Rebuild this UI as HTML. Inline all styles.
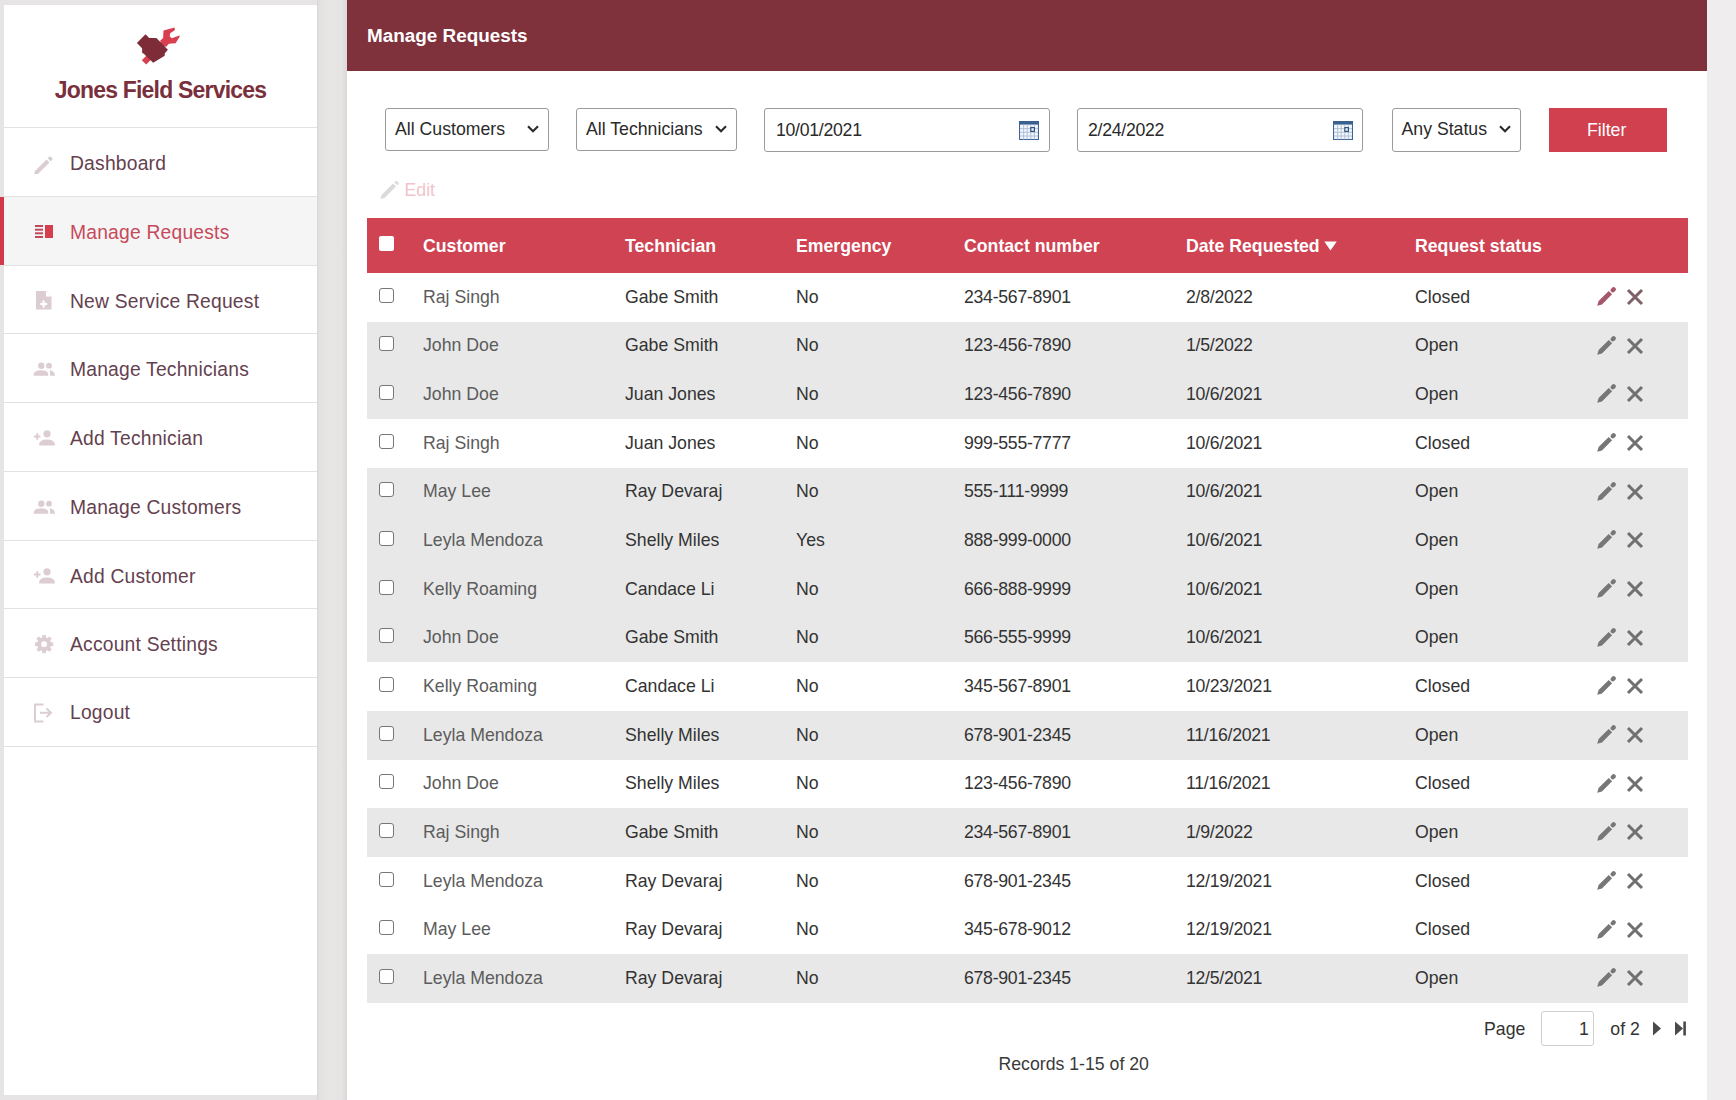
<!DOCTYPE html>
<html><head><meta charset="utf-8">
<style>
*{box-sizing:border-box;margin:0;padding:0}
html,body{width:1736px;height:1100px;overflow:hidden}
body{background:#e6e4e4;font-family:"Liberation Sans",sans-serif;position:relative}
.a{position:absolute;white-space:nowrap;line-height:1}
#right{position:absolute;left:1707px;top:0;width:29px;height:1100px;background:#efeded}
#side{position:absolute;left:4px;top:5px;width:313px;height:1090px;background:#fff}
#brand{left:4px;width:313px;top:78.8px;text-align:center;font-weight:bold;font-size:23px;letter-spacing:-0.8px;color:#7a2f3c}
.sep{position:absolute;left:4px;width:313px;height:1px;background:#e2e2e2}
.navt{font-size:19.3px;letter-spacing:0.2px;color:#65414f;left:70px}
.navi{position:absolute;left:30px;width:28px;height:24px}
#actbg{position:absolute;left:4px;top:197px;width:313px;height:68px;background:#f6f5f5}
#actbar{position:absolute;left:0;top:197px;width:4px;height:68px;background:#d3394d}
#gap{position:absolute;left:317px;top:0;width:30px;height:1100px;background:linear-gradient(to right,#d8d6d6 0,#e2e0e0 2px,#e8e5e5 40%,#e7e4e4 80%,#dad8d8 100%)}
#main{position:absolute;left:347px;top:0;width:1360px;height:1100px;background:#fff}
#hdr{position:absolute;left:347px;top:0;width:1360px;height:71px;background:#7f313c}
#htitle{left:367px;top:26.5px;font-size:18.9px;font-weight:bold;color:#fff}
.box{position:absolute;top:108px;height:43px;border:1px solid #9b9b9b;border-radius:3px;background:#fff}
.ftxt{font-size:17.7px;color:#2a2a2a;top:121px}
.chev{position:absolute;top:125px}
#filter{position:absolute;left:1549px;top:108px;width:118px;height:44px;background:#d1404f}
#filtert{left:1549px;width:118px;text-align:center;top:121px;font-size:17.7px;color:#fff}
#editt{left:404.5px;top:182px;font-size:17.7px;color:#f2c3cb}
#th{position:absolute;left:367px;top:218px;width:1321px;height:55px;background:#cf4353}
.tht{font-size:17.7px;font-weight:bold;color:#fff;top:238px}
#rows{position:absolute;left:367px;top:218px;width:1321px}
.row{position:absolute;left:0;width:1321px;height:48.67px;font-size:17.7px;color:#333}
.row.g{background:#e8e8e8}
.row span{position:absolute;top:15.5px;white-space:nowrap;line-height:1}
.row .c1{color:#5c5c5c}
.row .c4,.row .c5{letter-spacing:-0.28px}
.num{letter-spacing:-0.28px}
.cb{position:absolute;left:12px;top:14.6px;width:15px;height:15px;border:1.2px solid #767676;border-radius:3px;background:#fff}
.row .ed{position:absolute;left:1229px;top:14px}
.row .x{position:absolute;left:1259px;top:15px}
.pgt{font-size:17.7px;color:#333}
</style></head><body>

<div id="right"></div>
<div id="gap"></div>
<div id="side"></div>
<div id="actbg"></div>
<div id="actbar"></div>
<svg class="logo" style="position:absolute;left:130px;top:22px" width="55" height="46" viewBox="130 22 55 46">
  <path d="M144 62.4 L165 41.5" stroke="#d83f50" stroke-width="6.2"/>
  <path d="M160.1 40.8 L163.1 37.9 L163.5 30.4 L174.4 27.4 L175 30 L170.2 33.3 L169.7 36.2 L171.8 38.3 L179.4 35.4 L179.8 36.4 L175.6 43.3 L168.9 43.8 L166 47.1 Z" fill="#d83f50"/>
  <path d="M136.9 43.1 L145.5 34.3 L149.2 38.1 L156.4 38.1 L167.9 49.8 L164.7 53.6 L164.7 55.7 L153.2 62.8 L143.8 53.8 L142.1 52.8 L142.1 48.2 Z" fill="#7e2c38"/>
</svg>
<div id="brand" class="a">Jones Field Services</div>
<div class="sep" style="top:127px"></div>
<div class="sep" style="top:196px"></div>
<div class="sep" style="top:265px"></div>
<div class="sep" style="top:333px"></div>
<div class="sep" style="top:402px"></div>
<div class="sep" style="top:471px"></div>
<div class="sep" style="top:540px"></div>
<div class="sep" style="top:608px"></div>
<div class="sep" style="top:677px"></div>
<div class="sep" style="top:746px"></div>
<svg class="navi" style="top:150.3px" viewBox="0 0 28 24"><path d="M5 21 L16.5 9.5 L19.5 12.5 L8 24 L4.5 24.5 Z" fill="#dccdd2"/><path d="M5 21 L8 24 L4.5 24.5 Z" fill="#d0d0d0"/><path d="M17.7 8.3 L19.3 6.7 Q20 6 20.7 6.7 L22.3 8.3 Q23 9 22.3 9.7 L20.7 11.3 Z" fill="#d0d0d0"/></svg><div class="a navt" style="top:153.5px">Dashboard</div>
<svg class="navi" style="top:219.5px" viewBox="0 0 28 24"><rect x="5" y="5" width="8" height="2" fill="#c04a5c"/><rect x="5" y="8.7" width="8" height="2" fill="#c04a5c"/><rect x="5" y="12.3" width="8" height="2" fill="#c04a5c"/><rect x="5" y="16" width="8" height="2" fill="#c04a5c"/><rect x="15" y="5" width="8" height="13" fill="#d63d4e"/></svg><div class="a navt" style="top:222.7px;color:#c64a5c">Manage Requests</div>
<svg class="navi" style="top:288.3px" viewBox="0 0 28 24"><path d="M6 3 L16 3 L21.5 8.5 L21.5 21.5 L6 21.5 Z" fill="#dccdd2"/><path d="M16 3 L16 8.5 L21.5 8.5 Z" fill="#fff"/><rect x="12.5" y="12.5" width="2.2" height="7" fill="#fff"/><rect x="10.2" y="14.9" width="7" height="2.2" fill="#fff"/></svg><div class="a navt" style="top:291.5px">New Service Request</div>
<svg class="navi" style="top:356.3px" viewBox="0 0 28 24"><circle cx="11.3" cy="9.7" r="3.2" fill="#dccdd2"/><circle cx="19" cy="9.7" r="2.9" fill="#dccdd2"/><path d="M3.5 19.7 Q3.5 14.3 11.3 14.3 Q17 14.3 18.2 17.5 L18.2 19.7 Z" fill="#dccdd2"/><path d="M19.5 14.3 Q24.5 14.5 25 19.7 L20 19.7 L20 17 Q19.8 15 19.5 14.3 Z" fill="#dccdd2"/></svg><div class="a navt" style="top:359.5px">Manage Technicians</div>
<svg class="navi" style="top:425.6px" viewBox="0 0 28 24"><rect x="4" y="9.5" width="6.5" height="2" fill="#dccdd2"/><rect x="6.25" y="7.2" width="2" height="6.5" fill="#dccdd2"/><circle cx="17" cy="7.8" r="3.6" fill="#dccdd2"/><path d="M9 19.5 Q9 13.6 17 13.6 Q25 13.6 25 19.5 Z" fill="#dccdd2"/></svg><div class="a navt" style="top:428.8px">Add Technician</div>
<svg class="navi" style="top:494.3px" viewBox="0 0 28 24"><circle cx="11.3" cy="9.7" r="3.2" fill="#dccdd2"/><circle cx="19" cy="9.7" r="2.9" fill="#dccdd2"/><path d="M3.5 19.7 Q3.5 14.3 11.3 14.3 Q17 14.3 18.2 17.5 L18.2 19.7 Z" fill="#dccdd2"/><path d="M19.5 14.3 Q24.5 14.5 25 19.7 L20 19.7 L20 17 Q19.8 15 19.5 14.3 Z" fill="#dccdd2"/></svg><div class="a navt" style="top:497.5px">Manage Customers</div>
<svg class="navi" style="top:563.7px" viewBox="0 0 28 24"><rect x="4" y="9.5" width="6.5" height="2" fill="#dccdd2"/><rect x="6.25" y="7.2" width="2" height="6.5" fill="#dccdd2"/><circle cx="17" cy="7.8" r="3.6" fill="#dccdd2"/><path d="M9 19.5 Q9 13.6 17 13.6 Q25 13.6 25 19.5 Z" fill="#dccdd2"/></svg><div class="a navt" style="top:566.9px">Add Customer</div>
<svg class="navi" style="top:631.9px" viewBox="0 0 28 24"><path d="M20.83,10.26 L23.26,10.60 L23.26,13.80 L20.83,14.14 L20.23,15.58 L21.71,17.55 L19.45,19.81 L17.48,18.33 L16.04,18.93 L15.70,21.36 L12.50,21.36 L12.16,18.93 L10.72,18.33 L8.75,19.81 L6.49,17.55 L7.97,15.58 L7.37,14.14 L4.94,13.80 L4.94,10.60 L7.37,10.26 L7.97,8.82 L6.49,6.85 L8.75,4.59 L10.72,6.07 L12.16,5.47 L12.50,3.04 L15.70,3.04 L16.04,5.47 L17.48,6.07 L19.45,4.59 L21.71,6.85 L20.23,8.82 Z M17.0,12.2 A2.9,2.9 0 1,0 11.2,12.2 A2.9,2.9 0 1,0 17.0,12.2 Z" fill="#dccdd2" fill-rule="evenodd"/></svg><div class="a navt" style="top:635.1px">Account Settings</div>
<svg class="navi" style="top:700.1px" viewBox="0 0 28 24"><path d="M13.5 4.5 L5 4.5 L5 21.5 L13.5 21.5" stroke="#dccdd2" stroke-width="2" fill="none"/><path d="M10 12.8 L20.5 12.8 M16.5 8.5 L21 12.8 L16.5 17.1" stroke="#dccdd2" stroke-width="2" fill="none"/></svg><div class="a navt" style="top:703.3px">Logout</div>
<div id="main"></div>
<div id="hdr"></div>
<div id="htitle" class="a">Manage Requests</div>
<div class="box" style="left:385px;width:164px"></div><div class="a ftxt" style="left:395px">All Customers</div><svg class="chev" style="left:527px" width="12" height="8" viewBox="0 0 12 8"><path d="M1 1.2 L6 6.2 L11 1.2" stroke="#2a2a2a" stroke-width="2.1" fill="none"/></svg>
<div class="box" style="left:576px;width:161px"></div><div class="a ftxt" style="left:586px">All Technicians</div><svg class="chev" style="left:715px" width="12" height="8" viewBox="0 0 12 8"><path d="M1 1.2 L6 6.2 L11 1.2" stroke="#2a2a2a" stroke-width="2.1" fill="none"/></svg>
<div class="box" style="left:764px;width:286px;height:44px"></div><div class="a ftxt num" style="left:776px;top:122px">10/01/2021</div><svg style="position:absolute;left:1019px;top:121px" width="20" height="19" viewBox="0 0 20 19"><rect x="0.5" y="0.5" width="19" height="18" fill="#f2f6fb" stroke="#3f6394" stroke-width="1.1"/><rect x="0" y="0" width="20" height="3.6" fill="#3a6090"/><path d="M1 7.6 H19 M1 11.3 H19 M1 15 H19 M4.6 3.6 V18.5 M8.2 3.6 V18.5 M11.8 3.6 V18.5 M15.4 3.6 V18.5" stroke="#a9bcd6" stroke-width="0.9"/><rect x="11.8" y="6.6" width="3.6" height="3.8" fill="#d8ecf8" stroke="#2c4a72" stroke-width="1.1"/></svg>
<div class="box" style="left:1077px;width:286px;height:44px"></div><div class="a ftxt num" style="left:1088px;top:122px">2/24/2022</div><svg style="position:absolute;left:1333px;top:121px" width="20" height="19" viewBox="0 0 20 19"><rect x="0.5" y="0.5" width="19" height="18" fill="#f2f6fb" stroke="#3f6394" stroke-width="1.1"/><rect x="0" y="0" width="20" height="3.6" fill="#3a6090"/><path d="M1 7.6 H19 M1 11.3 H19 M1 15 H19 M4.6 3.6 V18.5 M8.2 3.6 V18.5 M11.8 3.6 V18.5 M15.4 3.6 V18.5" stroke="#a9bcd6" stroke-width="0.9"/><rect x="11.8" y="6.6" width="3.6" height="3.8" fill="#d8ecf8" stroke="#2c4a72" stroke-width="1.1"/></svg>
<div class="box" style="left:1392px;width:129px;height:44px"></div><div class="a ftxt" style="left:1401.5px">Any Status</div><svg class="chev" style="left:1499px" width="12" height="8" viewBox="0 0 12 8"><path d="M1 1.2 L6 6.2 L11 1.2" stroke="#2a2a2a" stroke-width="2.1" fill="none"/></svg>
<div id="filter"></div><div id="filtert" class="a" style="top:121.8px;left:1547.7px">Filter</div>
<svg style="position:absolute;left:378px;top:179px" width="22" height="22" viewBox="0 0 22 22"><path d="M3.5 16 L15 4.5 L18 7.5 L6.5 19 L2.5 20 Z" fill="#dadada"/><path d="M16.2 3.3 L17.5 2 Q18.2 1.3 18.9 2 L20.5 3.6 Q21.2 4.3 20.5 5 L19.2 6.3 Z" fill="#dcdcdc"/></svg><div id="editt" class="a">Edit</div>
<div id="th"></div>
<div style="position:absolute;left:379px;top:236px;width:14.5px;height:14.5px;background:#fff;border-radius:2px"></div>
<div class="a tht" style="left:423px">Customer</div>
<div class="a tht" style="left:625px">Technician</div>
<div class="a tht" style="left:796px">Emergency</div>
<div class="a tht" style="left:964px">Contact number</div>
<div class="a tht" style="left:1186px">Date Requested</div>
<div class="a tht" style="left:1415px">Request status</div>
<svg style="position:absolute;left:1323.5px;top:241px" width="13" height="10" viewBox="0 0 13 10"><path d="M0.3 0.5 H12.7 L6.5 9.5 Z" fill="#fff"/></svg>
<div id="rows">
<div class="row" style="top:55.00px"><div class="cb"></div><span class="c1" style="left:56px">Raj Singh</span><span class="c2" style="left:258px">Gabe Smith</span><span class="c3" style="left:429px">No</span><span class="c4" style="left:597px">234-567-8901</span><span class="c5" style="left:819px">2/8/2022</span><span class="c6" style="left:1048px">Closed</span><svg class="ed" width="20" height="20" viewBox="0 0 20 20" style="color:#a4576a"><g fill="#a4576a"><path d="M1.2 18.8 L2.6 14 L6 17.4 Z M2.6 14 L12.7 3.9 L16.1 7.3 L6 17.4 Z"/><path d="M16.8 3.2 L17.6 2.4" stroke-width="4.4" stroke-linecap="round" stroke="#a4576a"/></g></svg><svg class="x" width="18" height="18" viewBox="0 0 18 18" style="color:#7d6268"><path d="M2 2 L16 16 M16 2 L2 16" stroke="#7d6268" stroke-width="3" fill="none"/></svg></div>
<div class="row g" style="top:103.67px"><div class="cb"></div><span class="c1" style="left:56px">John Doe</span><span class="c2" style="left:258px">Gabe Smith</span><span class="c3" style="left:429px">No</span><span class="c4" style="left:597px">123-456-7890</span><span class="c5" style="left:819px">1/5/2022</span><span class="c6" style="left:1048px">Open</span><svg class="ed" width="20" height="20" viewBox="0 0 20 20" style="color:#777777"><g fill="#777777"><path d="M1.2 18.8 L2.6 14 L6 17.4 Z M2.6 14 L12.7 3.9 L16.1 7.3 L6 17.4 Z"/><path d="M16.8 3.2 L17.6 2.4" stroke-width="4.4" stroke-linecap="round" stroke="#777777"/></g></svg><svg class="x" width="18" height="18" viewBox="0 0 18 18" style="color:#707070"><path d="M2 2 L16 16 M16 2 L2 16" stroke="#707070" stroke-width="3" fill="none"/></svg></div>
<div class="row g" style="top:152.34px"><div class="cb"></div><span class="c1" style="left:56px">John Doe</span><span class="c2" style="left:258px">Juan Jones</span><span class="c3" style="left:429px">No</span><span class="c4" style="left:597px">123-456-7890</span><span class="c5" style="left:819px">10/6/2021</span><span class="c6" style="left:1048px">Open</span><svg class="ed" width="20" height="20" viewBox="0 0 20 20" style="color:#777777"><g fill="#777777"><path d="M1.2 18.8 L2.6 14 L6 17.4 Z M2.6 14 L12.7 3.9 L16.1 7.3 L6 17.4 Z"/><path d="M16.8 3.2 L17.6 2.4" stroke-width="4.4" stroke-linecap="round" stroke="#777777"/></g></svg><svg class="x" width="18" height="18" viewBox="0 0 18 18" style="color:#707070"><path d="M2 2 L16 16 M16 2 L2 16" stroke="#707070" stroke-width="3" fill="none"/></svg></div>
<div class="row" style="top:201.01px"><div class="cb"></div><span class="c1" style="left:56px">Raj Singh</span><span class="c2" style="left:258px">Juan Jones</span><span class="c3" style="left:429px">No</span><span class="c4" style="left:597px">999-555-7777</span><span class="c5" style="left:819px">10/6/2021</span><span class="c6" style="left:1048px">Closed</span><svg class="ed" width="20" height="20" viewBox="0 0 20 20" style="color:#777777"><g fill="#777777"><path d="M1.2 18.8 L2.6 14 L6 17.4 Z M2.6 14 L12.7 3.9 L16.1 7.3 L6 17.4 Z"/><path d="M16.8 3.2 L17.6 2.4" stroke-width="4.4" stroke-linecap="round" stroke="#777777"/></g></svg><svg class="x" width="18" height="18" viewBox="0 0 18 18" style="color:#707070"><path d="M2 2 L16 16 M16 2 L2 16" stroke="#707070" stroke-width="3" fill="none"/></svg></div>
<div class="row g" style="top:249.68px"><div class="cb"></div><span class="c1" style="left:56px">May Lee</span><span class="c2" style="left:258px">Ray Devaraj</span><span class="c3" style="left:429px">No</span><span class="c4" style="left:597px">555-111-9999</span><span class="c5" style="left:819px">10/6/2021</span><span class="c6" style="left:1048px">Open</span><svg class="ed" width="20" height="20" viewBox="0 0 20 20" style="color:#777777"><g fill="#777777"><path d="M1.2 18.8 L2.6 14 L6 17.4 Z M2.6 14 L12.7 3.9 L16.1 7.3 L6 17.4 Z"/><path d="M16.8 3.2 L17.6 2.4" stroke-width="4.4" stroke-linecap="round" stroke="#777777"/></g></svg><svg class="x" width="18" height="18" viewBox="0 0 18 18" style="color:#707070"><path d="M2 2 L16 16 M16 2 L2 16" stroke="#707070" stroke-width="3" fill="none"/></svg></div>
<div class="row g" style="top:298.35px"><div class="cb"></div><span class="c1" style="left:56px">Leyla Mendoza</span><span class="c2" style="left:258px">Shelly Miles</span><span class="c3" style="left:429px">Yes</span><span class="c4" style="left:597px">888-999-0000</span><span class="c5" style="left:819px">10/6/2021</span><span class="c6" style="left:1048px">Open</span><svg class="ed" width="20" height="20" viewBox="0 0 20 20" style="color:#777777"><g fill="#777777"><path d="M1.2 18.8 L2.6 14 L6 17.4 Z M2.6 14 L12.7 3.9 L16.1 7.3 L6 17.4 Z"/><path d="M16.8 3.2 L17.6 2.4" stroke-width="4.4" stroke-linecap="round" stroke="#777777"/></g></svg><svg class="x" width="18" height="18" viewBox="0 0 18 18" style="color:#707070"><path d="M2 2 L16 16 M16 2 L2 16" stroke="#707070" stroke-width="3" fill="none"/></svg></div>
<div class="row g" style="top:347.02px"><div class="cb"></div><span class="c1" style="left:56px">Kelly Roaming</span><span class="c2" style="left:258px">Candace Li</span><span class="c3" style="left:429px">No</span><span class="c4" style="left:597px">666-888-9999</span><span class="c5" style="left:819px">10/6/2021</span><span class="c6" style="left:1048px">Open</span><svg class="ed" width="20" height="20" viewBox="0 0 20 20" style="color:#777777"><g fill="#777777"><path d="M1.2 18.8 L2.6 14 L6 17.4 Z M2.6 14 L12.7 3.9 L16.1 7.3 L6 17.4 Z"/><path d="M16.8 3.2 L17.6 2.4" stroke-width="4.4" stroke-linecap="round" stroke="#777777"/></g></svg><svg class="x" width="18" height="18" viewBox="0 0 18 18" style="color:#707070"><path d="M2 2 L16 16 M16 2 L2 16" stroke="#707070" stroke-width="3" fill="none"/></svg></div>
<div class="row g" style="top:395.69px"><div class="cb"></div><span class="c1" style="left:56px">John Doe</span><span class="c2" style="left:258px">Gabe Smith</span><span class="c3" style="left:429px">No</span><span class="c4" style="left:597px">566-555-9999</span><span class="c5" style="left:819px">10/6/2021</span><span class="c6" style="left:1048px">Open</span><svg class="ed" width="20" height="20" viewBox="0 0 20 20" style="color:#777777"><g fill="#777777"><path d="M1.2 18.8 L2.6 14 L6 17.4 Z M2.6 14 L12.7 3.9 L16.1 7.3 L6 17.4 Z"/><path d="M16.8 3.2 L17.6 2.4" stroke-width="4.4" stroke-linecap="round" stroke="#777777"/></g></svg><svg class="x" width="18" height="18" viewBox="0 0 18 18" style="color:#707070"><path d="M2 2 L16 16 M16 2 L2 16" stroke="#707070" stroke-width="3" fill="none"/></svg></div>
<div class="row" style="top:444.36px"><div class="cb"></div><span class="c1" style="left:56px">Kelly Roaming</span><span class="c2" style="left:258px">Candace Li</span><span class="c3" style="left:429px">No</span><span class="c4" style="left:597px">345-567-8901</span><span class="c5" style="left:819px">10/23/2021</span><span class="c6" style="left:1048px">Closed</span><svg class="ed" width="20" height="20" viewBox="0 0 20 20" style="color:#777777"><g fill="#777777"><path d="M1.2 18.8 L2.6 14 L6 17.4 Z M2.6 14 L12.7 3.9 L16.1 7.3 L6 17.4 Z"/><path d="M16.8 3.2 L17.6 2.4" stroke-width="4.4" stroke-linecap="round" stroke="#777777"/></g></svg><svg class="x" width="18" height="18" viewBox="0 0 18 18" style="color:#707070"><path d="M2 2 L16 16 M16 2 L2 16" stroke="#707070" stroke-width="3" fill="none"/></svg></div>
<div class="row g" style="top:493.03px"><div class="cb"></div><span class="c1" style="left:56px">Leyla Mendoza</span><span class="c2" style="left:258px">Shelly Miles</span><span class="c3" style="left:429px">No</span><span class="c4" style="left:597px">678-901-2345</span><span class="c5" style="left:819px">11/16/2021</span><span class="c6" style="left:1048px">Open</span><svg class="ed" width="20" height="20" viewBox="0 0 20 20" style="color:#777777"><g fill="#777777"><path d="M1.2 18.8 L2.6 14 L6 17.4 Z M2.6 14 L12.7 3.9 L16.1 7.3 L6 17.4 Z"/><path d="M16.8 3.2 L17.6 2.4" stroke-width="4.4" stroke-linecap="round" stroke="#777777"/></g></svg><svg class="x" width="18" height="18" viewBox="0 0 18 18" style="color:#707070"><path d="M2 2 L16 16 M16 2 L2 16" stroke="#707070" stroke-width="3" fill="none"/></svg></div>
<div class="row" style="top:541.70px"><div class="cb"></div><span class="c1" style="left:56px">John Doe</span><span class="c2" style="left:258px">Shelly Miles</span><span class="c3" style="left:429px">No</span><span class="c4" style="left:597px">123-456-7890</span><span class="c5" style="left:819px">11/16/2021</span><span class="c6" style="left:1048px">Closed</span><svg class="ed" width="20" height="20" viewBox="0 0 20 20" style="color:#777777"><g fill="#777777"><path d="M1.2 18.8 L2.6 14 L6 17.4 Z M2.6 14 L12.7 3.9 L16.1 7.3 L6 17.4 Z"/><path d="M16.8 3.2 L17.6 2.4" stroke-width="4.4" stroke-linecap="round" stroke="#777777"/></g></svg><svg class="x" width="18" height="18" viewBox="0 0 18 18" style="color:#707070"><path d="M2 2 L16 16 M16 2 L2 16" stroke="#707070" stroke-width="3" fill="none"/></svg></div>
<div class="row g" style="top:590.37px"><div class="cb"></div><span class="c1" style="left:56px">Raj Singh</span><span class="c2" style="left:258px">Gabe Smith</span><span class="c3" style="left:429px">No</span><span class="c4" style="left:597px">234-567-8901</span><span class="c5" style="left:819px">1/9/2022</span><span class="c6" style="left:1048px">Open</span><svg class="ed" width="20" height="20" viewBox="0 0 20 20" style="color:#777777"><g fill="#777777"><path d="M1.2 18.8 L2.6 14 L6 17.4 Z M2.6 14 L12.7 3.9 L16.1 7.3 L6 17.4 Z"/><path d="M16.8 3.2 L17.6 2.4" stroke-width="4.4" stroke-linecap="round" stroke="#777777"/></g></svg><svg class="x" width="18" height="18" viewBox="0 0 18 18" style="color:#707070"><path d="M2 2 L16 16 M16 2 L2 16" stroke="#707070" stroke-width="3" fill="none"/></svg></div>
<div class="row" style="top:639.04px"><div class="cb"></div><span class="c1" style="left:56px">Leyla Mendoza</span><span class="c2" style="left:258px">Ray Devaraj</span><span class="c3" style="left:429px">No</span><span class="c4" style="left:597px">678-901-2345</span><span class="c5" style="left:819px">12/19/2021</span><span class="c6" style="left:1048px">Closed</span><svg class="ed" width="20" height="20" viewBox="0 0 20 20" style="color:#777777"><g fill="#777777"><path d="M1.2 18.8 L2.6 14 L6 17.4 Z M2.6 14 L12.7 3.9 L16.1 7.3 L6 17.4 Z"/><path d="M16.8 3.2 L17.6 2.4" stroke-width="4.4" stroke-linecap="round" stroke="#777777"/></g></svg><svg class="x" width="18" height="18" viewBox="0 0 18 18" style="color:#707070"><path d="M2 2 L16 16 M16 2 L2 16" stroke="#707070" stroke-width="3" fill="none"/></svg></div>
<div class="row" style="top:687.71px"><div class="cb"></div><span class="c1" style="left:56px">May Lee</span><span class="c2" style="left:258px">Ray Devaraj</span><span class="c3" style="left:429px">No</span><span class="c4" style="left:597px">345-678-9012</span><span class="c5" style="left:819px">12/19/2021</span><span class="c6" style="left:1048px">Closed</span><svg class="ed" width="20" height="20" viewBox="0 0 20 20" style="color:#777777"><g fill="#777777"><path d="M1.2 18.8 L2.6 14 L6 17.4 Z M2.6 14 L12.7 3.9 L16.1 7.3 L6 17.4 Z"/><path d="M16.8 3.2 L17.6 2.4" stroke-width="4.4" stroke-linecap="round" stroke="#777777"/></g></svg><svg class="x" width="18" height="18" viewBox="0 0 18 18" style="color:#707070"><path d="M2 2 L16 16 M16 2 L2 16" stroke="#707070" stroke-width="3" fill="none"/></svg></div>
<div class="row g" style="top:736.38px"><div class="cb"></div><span class="c1" style="left:56px">Leyla Mendoza</span><span class="c2" style="left:258px">Ray Devaraj</span><span class="c3" style="left:429px">No</span><span class="c4" style="left:597px">678-901-2345</span><span class="c5" style="left:819px">12/5/2021</span><span class="c6" style="left:1048px">Open</span><svg class="ed" width="20" height="20" viewBox="0 0 20 20" style="color:#777777"><g fill="#777777"><path d="M1.2 18.8 L2.6 14 L6 17.4 Z M2.6 14 L12.7 3.9 L16.1 7.3 L6 17.4 Z"/><path d="M16.8 3.2 L17.6 2.4" stroke-width="4.4" stroke-linecap="round" stroke="#777777"/></g></svg><svg class="x" width="18" height="18" viewBox="0 0 18 18" style="color:#707070"><path d="M2 2 L16 16 M16 2 L2 16" stroke="#707070" stroke-width="3" fill="none"/></svg></div>
</div>
<div class="a pgt" style="left:1484px;top:1021.3px">Page</div>
<div style="position:absolute;left:1541px;top:1011px;width:53px;height:35px;border:1px solid #cfcfcf;border-radius:3px;background:#fff"></div>
<div class="a pgt" style="left:1579px;top:1021.3px">1</div>
<div class="a pgt" style="left:1610.3px;top:1021.3px">of 2</div>
<svg style="position:absolute;left:1652px;top:1021px" width="10" height="15" viewBox="0 0 10 15"><path d="M1 0.5 L9 7.5 L1 14.5 Z" fill="#4a4a4a"/></svg>
<svg style="position:absolute;left:1674px;top:1021px" width="14" height="15" viewBox="0 0 14 15"><path d="M1 0.5 L9 7.5 L1 14.5 Z" fill="#4a4a4a"/><rect x="9.3" y="0.5" width="2.6" height="14" fill="#4a4a4a"/></svg>
<div class="a pgt" style="left:998.5px;top:1056px;color:#3a3a3a">Records 1-15 of 20</div>
</body></html>
